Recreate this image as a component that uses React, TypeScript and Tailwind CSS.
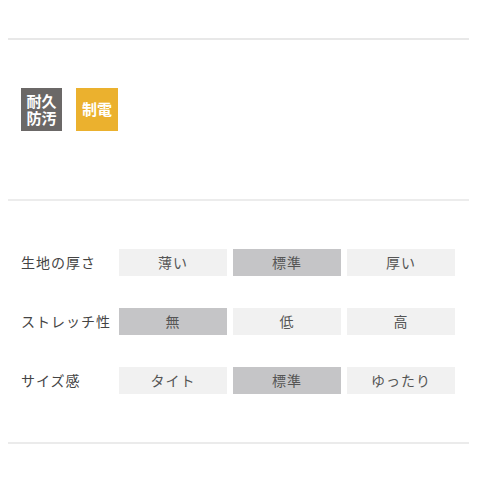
import React from "react";

const rows: { label: string; opts: string[]; sel: number }[] = [
  { label: "生地の厚さ", opts: ["薄い", "標準", "厚い"], sel: 1 },
  { label: "ストレッチ性", opts: ["無", "低", "高"], sel: 0 },
  { label: "サイズ感", opts: ["タイト", "標準", "ゆったり"], sel: 1 },
];

export default function App() {
  return (
    <div
      className="w-[480px] h-[480px] bg-white overflow-hidden"
      style={{ fontFamily: '"Noto Sans CJK JP", "Noto Sans", sans-serif' }}
    >
      <div className="pt-[38px] px-[8px]">
        <div className="h-[2px] w-[461px] bg-[#e8e8e8]" />
      </div>
      <div className="flex gap-[14px] pl-[21px] mt-[48px]">
        <div
          className="w-[41px] h-[43px] bg-[#6b6867] text-white font-bold text-[15px] leading-[17px] flex flex-col items-center justify-center font-['Liberation_Sans','Noto_Sans_CJK_JP',sans-serif]"
        >
          <span>耐久</span>
          <span>防汚</span>
        </div>
        <div className="w-[42px] h-[43px] bg-[#ebb12e] text-white font-bold text-[15px] leading-[17px] flex items-center justify-center font-['Liberation_Sans','Noto_Sans_CJK_JP',sans-serif]">
          制電
        </div>
      </div>
      <div className="px-[8px] mt-[68px]">
        <div className="h-[2px] w-[461px] bg-[#ececec]" />
      </div>
      <div className="flex flex-col gap-[32px] mt-[48px] pl-[21px]">
        {rows.map((r) => (
          <div key={r.label} className="flex items-center h-[27px]">
            <div className="w-[98px] text-[14px] text-[#444] tracking-[1px]">{r.label}</div>
            <div className="flex gap-[6px]">
              {r.opts.map((o, i) => (
                <div
                  key={o + i}
                  className={
                    "w-[108px] h-[27px] flex items-center justify-center text-[14px] text-[#555] tracking-[1px] " +
                    (i === r.sel ? "bg-[#c5c5c7]" : "bg-[#f1f1f1]")
                  }
                >
                  {o}
                </div>
              ))}
            </div>
          </div>
        ))}
      </div>
      <div className="px-[8px] mt-[48px]">
        <div className="h-[2px] w-[461px] bg-[#ebebeb]" />
      </div>
    </div>
  );
}
